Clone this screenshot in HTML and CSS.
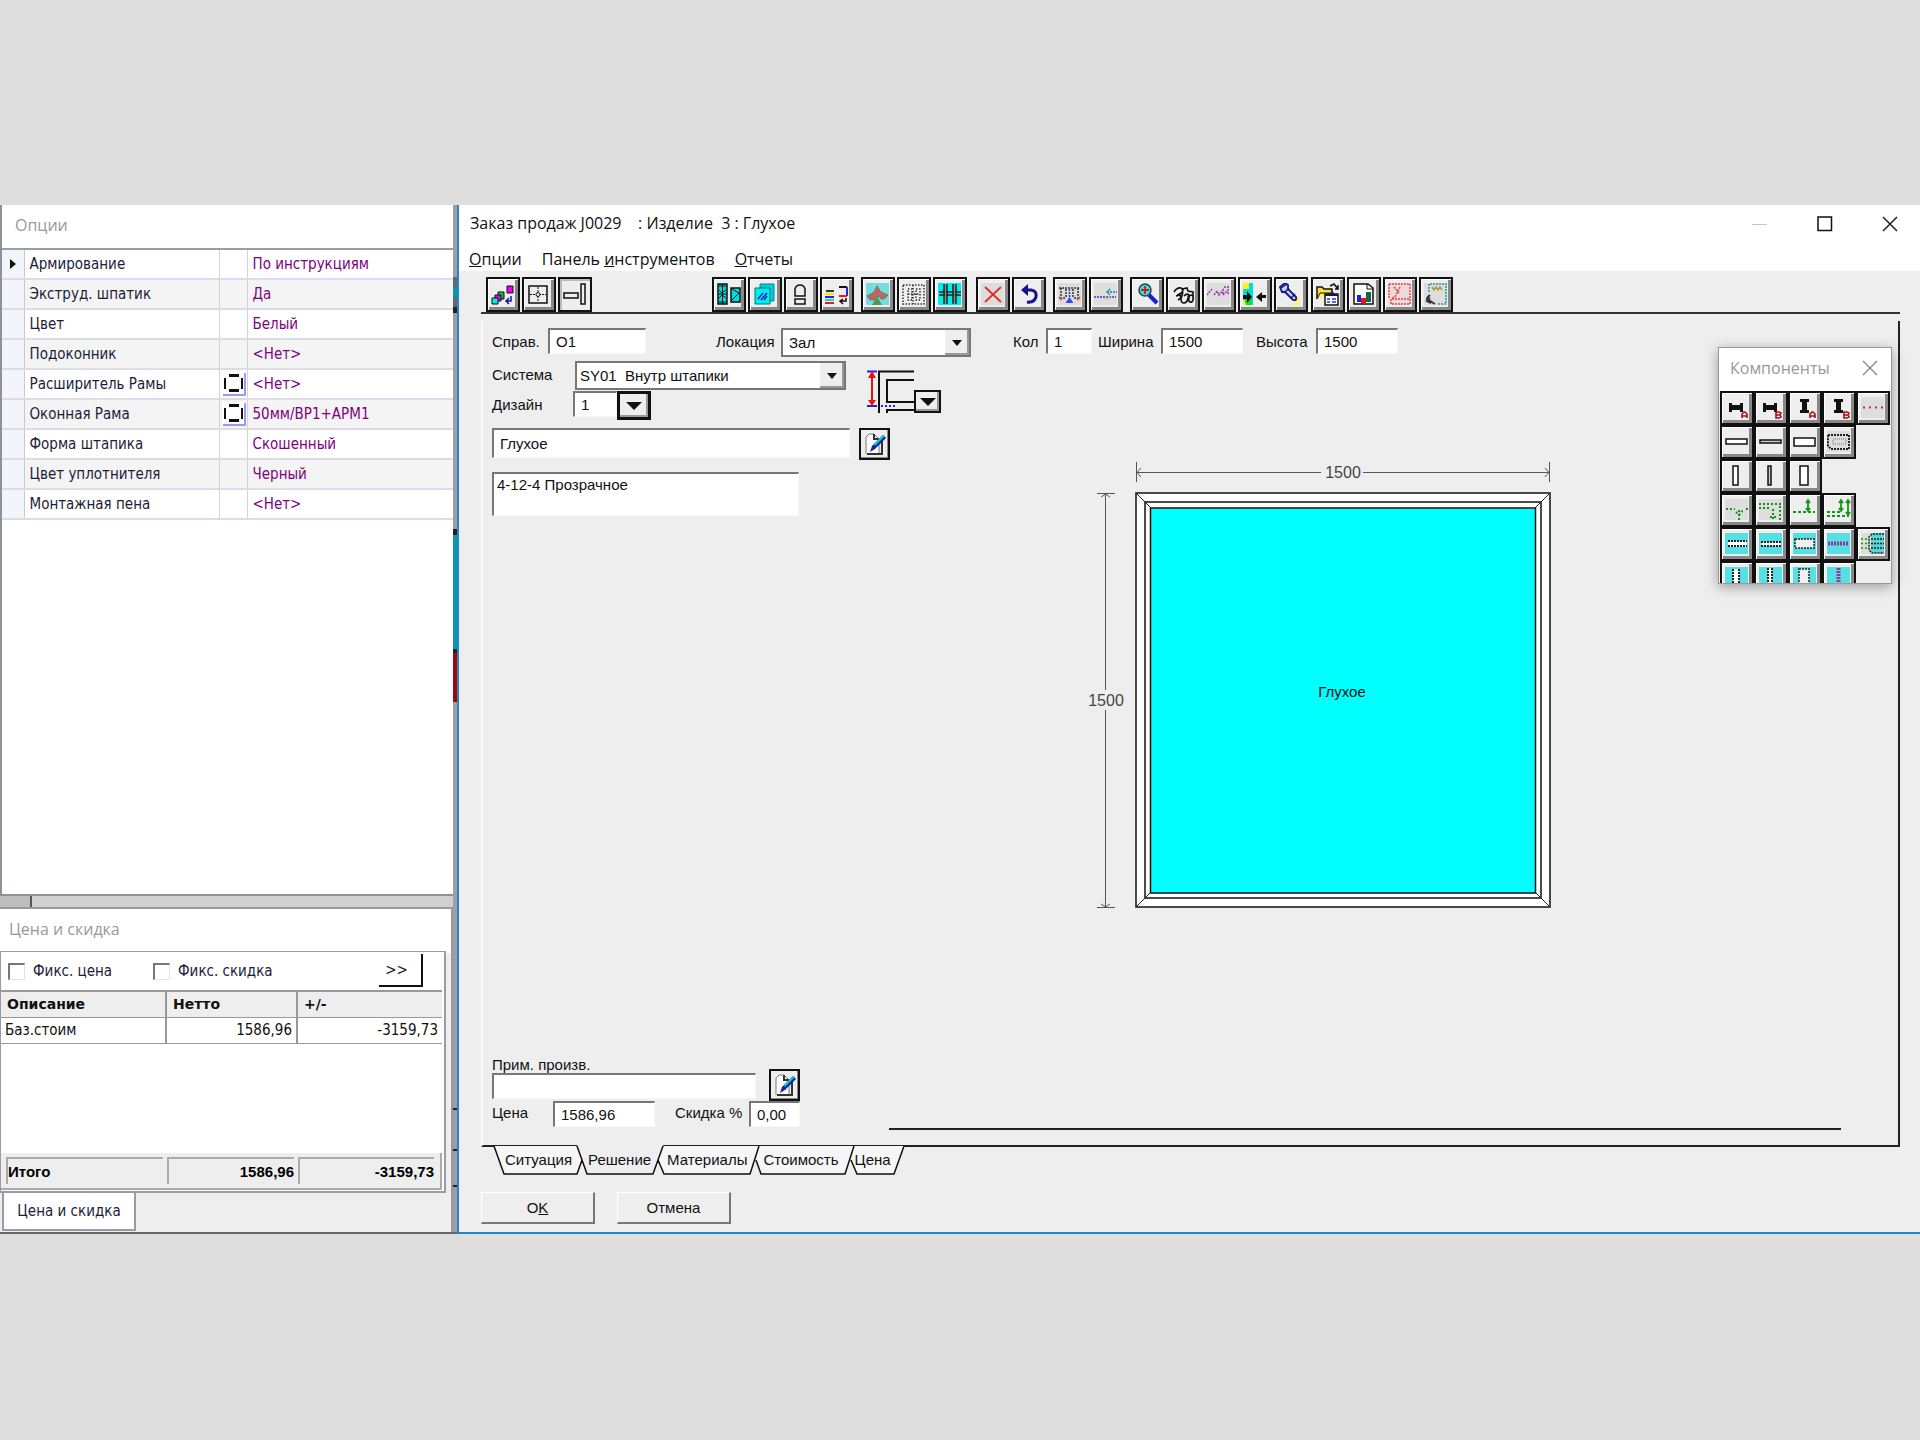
FILE: index.html
```html
<!DOCTYPE html>
<html lang="ru">
<head>
<meta charset="utf-8">
<title>Заказ продаж J0029</title>
<link rel="stylesheet" href="styles.css">
</head>
<body>
<main class="app">
  <aside class="side">
    <section class="options">
      <h2 class="panel-title">Опции</h2>
      <table class="option-grid">
        <tbody>
          <tr><td class="mark"><svg width="6" height="12" viewBox="0 0 6 12"><path d="M0 1l6 5-6 5z" fill="#111"/></svg></td><th scope="row">Армирование</th><td class="glyph"></td><td class="value">По инструкциям</td></tr>
          <tr><td class="mark"></td><th scope="row">Экструд. шпатик</th><td class="glyph"></td><td class="value">Да</td></tr>
          <tr><td class="mark"></td><th scope="row">Цвет</th><td class="glyph"></td><td class="value">Белый</td></tr>
          <tr><td class="mark"></td><th scope="row">Подоконник</th><td class="glyph"></td><td class="value">&lt;Нет&gt;</td></tr>
          <tr><td class="mark"></td><th scope="row">Расширитель Рамы</th><td class="glyph"><svg width="24" height="24" viewBox="0 0 24 24"><path d="M0 0h24v24H0z" fill="#fff"/><path d="M23 1v22H1" fill="none" stroke="#9a9af0" stroke-width="2"/><path d="M7 3.500h10M7 18.500h10" stroke="#111" stroke-width="3"/><path d="M3 6v11M20 6v11" stroke="#111" stroke-width="2"/></svg></td><td class="value">&lt;Нет&gt;</td></tr>
          <tr><td class="mark"></td><th scope="row">Оконная Рама</th><td class="glyph"><svg width="24" height="24" viewBox="0 0 24 24"><path d="M0 0h24v24H0z" fill="#fff"/><path d="M23 1v22H1" fill="none" stroke="#9a9af0" stroke-width="2"/><path d="M7 3.500h10M7 18.500h10" stroke="#111" stroke-width="3"/><path d="M3 6v11M20 6v11" stroke="#111" stroke-width="2"/></svg></td><td class="value">50мм/ВР1+АРМ1</td></tr>
          <tr><td class="mark"></td><th scope="row">Форма штапика</th><td class="glyph"></td><td class="value">Скошенный</td></tr>
          <tr><td class="mark"></td><th scope="row">Цвет уплотнителя</th><td class="glyph"></td><td class="value">Черный</td></tr>
          <tr><td class="mark"></td><th scope="row">Монтажная пена</th><td class="glyph"></td><td class="value">&lt;Нет&gt;</td></tr>
        </tbody>
      </table>
    </section>
    <div class="side-gap"></div>
    <section class="price">
      <h2 class="panel-title price-title">Цена и скидка</h2>
      <div class="price-body">
        <div class="fix-row">
          <label class="check"><input type="checkbox">Фикс. цена</label>
          <label class="check second"><input type="checkbox">Фикс. скидка</label>
          <button class="more" type="button">&gt;&gt;</button>
        </div>
        <table class="price-grid">
          <colgroup><col class="c1"><col class="c2"><col></colgroup>
          <thead><tr><th>Описание</th><th>Нетто</th><th>+/-</th></tr></thead>
          <tbody><tr><td>Баз.стоим</td><td class="num">1586,96</td><td class="num">-3159,73</td></tr></tbody>
        </table>
        <div class="totals"><span>Итого</span><span class="num">1586,96</span><span class="num">-3159,73</span></div>
      </div>
      <div class="price-tabs"><button type="button">Цена и скидка</button></div>
    </section>
    <svg class="strip" width="4" height="1029" viewBox="0 0 4 1029"><path d="M0 0h4v1029H0z" fill="#a09ea0"/><path d="M0 72h4v36H0z" fill="#666"/><path d="M0 82h4v10H0z" fill="#079aa8"/><path d="M0 102h4v6H0zM0 324h4v6H0zM0 444h4v4H0z" fill="#222"/><path d="M0 330h4v114H0z" fill="#079aa8"/><path d="M0 448h4v49H0z" fill="#a80606"/><path d="M0 903h4v2H0zM0 944h4v2H0zM0 980h4v2H0z" fill="#222"/></svg>
  </aside>

  <section class="window">
    <header class="titlebar">
      <h1>Заказ продаж J0029 &nbsp;&nbsp; : Изделие&nbsp; 3 : Глухое</h1>
      <div class="controls">
        <button type="button" aria-label="Свернуть"><svg width="16" height="16" viewBox="0 0 16 16"><path d="M0 8.500h15" stroke="#c4c4c4"/></svg></button>
        <button type="button" aria-label="Развернуть"><svg width="16" height="16" viewBox="0 0 16 16"><path d="M1 1h13.500v13.500H1z" fill="none" stroke="#111" stroke-width="1.500"/></svg></button>
        <button type="button" aria-label="Закрыть"><svg width="16" height="16" viewBox="0 0 16 16"><path d="M1 1l14 14M15 1L1 15" stroke="#222" stroke-width="1.500"/></svg></button>
      </div>
    </header>
    <nav class="menu">
      <a href="#options"><u>О</u>пции</a>
      <a href="#tools">Панель <u>и</u>нструментов</a>
      <a href="#reports"><u>О</u>тчеты</a>
    </nav>

    <div class="toolbar">
      <div class="tools first">
        <button class="tool" type="button" aria-label="Структура"><svg viewBox="0 0 24 24"><g stroke="#111"><path d="M7 9h6v7H7z" fill="#0c3"/><path d="M4 12h6v6H4z" fill="#e0e"/><path d="M1 15h6v6H1z" fill="#0ee"/><path d="M16 3h6v7h-6z" fill="#e0e"/></g><path d="M20 13v5h-5m3-3l-3 3 3 3" fill="none" stroke="#11a" stroke-width="1.500"/></svg></button>
        <button class="tool" type="button" aria-label="Рама"><svg viewBox="0 0 24 24"><path d="M2 3h18v17H2z" fill="none" stroke="#111" stroke-width="1.500"/><path d="M11 4v15M3 11.500h16" stroke="#111" stroke-dasharray="2 1"/><circle cx="11" cy="11.500" r="2" fill="#f0f0f0" stroke="#111"/></svg></button>
        <button class="tool pressed" type="button" aria-label="Импост"><svg viewBox="0 0 24 24"><path d="M1 10h14v5H1zM18 1h4v20h-4z" fill="#eee" stroke="#111" stroke-width="1.500"/></svg></button>
      </div>
      <div class="tools">
        <button class="tool" type="button" aria-label="Створки"><svg viewBox="0 0 24 24"><path d="M1 1h9v20H1zM14 5h9v14h-9z" fill="#0dd" stroke="#111" stroke-width="1.500"/><path d="M5.500 1v20M1 11h9M2 7l3 3 4-3M2 15l3-3 4 3M2 3h7M2 19h7" fill="none" stroke="#111"/><path d="M15 6l7 4-7 7" fill="none" stroke="#111"/></svg></button>
        <button class="tool" type="button" aria-label="Стекло"><svg viewBox="0 0 24 24"><path d="M7 1h14v17H7z" fill="#0cd" stroke="#088"/><path d="M2 5h15v16H2z" fill="#0ee" stroke="#077"/><path d="M5 16l5-6M8 17l6-7M11 17l3-4" stroke="#12c" stroke-width="1.500"/></svg></button>
        <button class="tool" type="button" aria-label="Форма"><svg viewBox="0 0 24 24"><path d="M6 13V6q1-4 5-4t5 4v7zM6 16h10v5H6z" fill="#eee" stroke="#111" stroke-width="1.500"/></svg></button>
        <button class="tool" type="button" aria-label="Цвет"><svg viewBox="0 0 24 24"><g stroke-width="2"><path d="M1 8h8" stroke="#333"/><path d="M0 11h9" stroke="#fd0"/><path d="M0 14h9" stroke="#22f"/><path d="M0 17h9" stroke="#0dd"/><path d="M0 20h9" stroke="#f11"/><path d="M14 4h8" stroke="#111"/><path d="M22 4v9" stroke="#22f"/><path d="M14 13h8" stroke="#f11"/></g><path d="M21 15v3h-5m2-2l-3 2 3 3" fill="none" stroke="#111" stroke-width="1.500"/></svg></button>
      </div>
      <div class="tools gap-s">
        <button class="tool" type="button" aria-label="Вид"><svg viewBox="0 0 24 24"><path d="M0 0h23v22H0z" fill="#73dcdc"/><path d="M11 3l4 6 7 3-4 4h-3l-3-3-4 4H4l-3-4 7-4z" fill="#b86a60" stroke="#744" stroke-dasharray="1 1"/><path d="M11 13l5 9H6z" fill="#4a9a55"/></svg></button>
        <button class="tool" type="button" aria-label="Сетка"><svg viewBox="0 0 24 24"><path d="M1 2h21v19H1zM6 6h4v11H6zM14 6h4v11h-4zM11 2v19M6 11h12" fill="none" stroke="#333" stroke-width="1.500" stroke-dasharray="1.500 1.500"/></svg></button>
        <button class="tool" type="button" aria-label="Раскладка"><svg viewBox="0 0 24 24"><path d="M0 0h23v22H0z" fill="#0ee"/><path d="M6 1v20M9 1v20M15 1v20M18 1v20M1 9h22M1 12h22" stroke="#222" stroke-width="1.500"/><path d="M7.500 2v18M16.500 2v18" stroke="#a77"/></svg></button>
      </div>
      <div class="tools gap-m">
        <button class="tool" type="button" aria-label="Удалить"><svg viewBox="0 0 24 24"><path d="M0 0h23v22H0z" fill="#dcdcdc"/><path d="M4 4l16 15M20 4L4 19" stroke="#e02a2a" stroke-width="1.800"/></svg></button>
        <button class="tool" type="button" aria-label="Отменить"><svg viewBox="0 0 24 24"><path d="M8 7h6q6 1 5 7-2 6-9 5" fill="none" stroke="#13138a" stroke-width="3"/><path d="M11 1v12L4 7z" fill="#13138a"/></svg></button>
      </div>
      <div class="tools gap-s">
        <button class="tool" type="button" aria-label="Размеры"><svg viewBox="0 0 24 24"><path d="M0 0h23v22H0z" fill="#ddd"/><path d="M1 5h21M3 5v10h5M20 5v10h-5M8 6v9M15 6v9" fill="none" stroke="#333" stroke-width="1.500" stroke-dasharray="2 1"/><path d="M11.500 6v9" stroke="#33d" stroke-width="1.500" stroke-dasharray="2 1"/><path d="M11.500 14l4 6h-8z" fill="#44e"/><path d="M1 14l3 3M22 14l-3 3" stroke="#c55" stroke-width="2"/></svg></button>
        <button class="tool" type="button" aria-label="Уровень"><svg viewBox="0 0 24 24"><path d="M0 0h23v22H0z" fill="#ddd"/><path d="M0 14h22" stroke="#33e" stroke-width="1.500" stroke-dasharray="2 1"/><path d="M13 9h10M16 6l-3 3 3 3" fill="none" stroke="#188" stroke-width="1.500" stroke-dasharray="2 1"/><path d="M10 15l3 2 3-4" fill="none" stroke="#cc3"/></svg></button>
      </div>
      <div class="tools gap-s">
        <button class="tool" type="button" aria-label="Масштаб"><svg viewBox="0 0 24 24"><path d="M14 12l8 8" stroke="#12d" stroke-width="4"/><circle cx="10" cy="7" r="6" fill="#3de" stroke="#244" stroke-width="1.500"/><path d="M10 3v8M6 7h8" stroke="#e11" stroke-width="1.800"/></svg></button>
        <button class="tool" type="button" aria-label="Поиск"><svg viewBox="0 0 24 24"><path d="M3 9q3-5 7-4l2 2q-1 4-6 5M5 13l4-1 1 3-3 2M11 6l5-1 1 3 5 1v8M12 9l-2 7q0 4 3 4t4-5l1-4M13 13q3-3 5-1M18 18q-1-5 2-6 3 0 2 5-1 3-3 2z" fill="none" stroke="#111" stroke-width="1.600"/></svg></button>
        <button class="tool" type="button" aria-label="Кривые"><svg viewBox="0 0 24 24"><path d="M0 0h23v22H0z" fill="#ddd"/><path d="M0 12l5-6M7 12l3-4 2 4 4-5v5l5-5v5M17 4h5" fill="none" stroke="#93a" stroke-width="1.500" stroke-dasharray="2 1"/></svg></button>
        <button class="tool" type="button" aria-label="Обмен"><svg viewBox="0 0 24 24"><path d="M0 0h10v22H0z" fill="#0dd"/><path d="M0 0h6v6H0zM0 17h5v5H0z" fill="#fe2"/><path d="M1 16h8v6H3z" fill="#1d4"/><path d="M0 12h4V8l5 6-5 6v-4H0zM23 12h-4V9l-6 5 6 5v-4h4z" fill="#111"/></svg></button>
        <button class="tool" type="button" aria-label="Подсветка"><svg viewBox="0 0 24 24"><path d="M21 10v12H11l6-5z" fill="#fff08a"/><path d="M1 4l5-4 3 2v4l8 8q1 4-3 3L6 9H3z" fill="#c9d6ea" stroke="#13138a" stroke-width="1.800"/><path d="M2 5l6-4M6 9l4-4M12 15l4-4" stroke="#13138a" stroke-width="1.500"/></svg></button>
      </div>
      <div class="tools gap-xs">
        <button class="tool" type="button" aria-label="Открыть"><svg viewBox="0 0 24 24"><path d="M1 16V4h5l2 2h8v5" fill="#fd4" stroke="#111" stroke-width="1.500"/><path d="M1 16l3-6h14" fill="#fe6" stroke="#111"/><path d="M14 3l4-2 4 5m-3 0h3V2" fill="none" stroke="#111" stroke-width="1.500"/><path d="M9 11h13v11H9z" fill="#fff" stroke="#111" stroke-width="1.500"/><path d="M9 12h13" stroke="#117" stroke-width="2"/><path d="M11 16h3M16 16h4M11 19h3M16 19h4" stroke="#33c" stroke-width="1.500"/></svg></button>
        <button class="tool" type="button" aria-label="Отчет"><svg viewBox="0 0 24 24"><path d="M2 1h14l5 4v16H2z" fill="#fff" stroke="#111" stroke-width="1.500"/><path d="M15 1v5h6" fill="none" stroke="#111"/><path d="M5 12h4v7H5z" fill="#12d"/><path d="M9 15h5v5H9z" fill="#e11"/><path d="M14 9h5v10h-5z" fill="#164"/></svg></button>
        <button class="tool" type="button" aria-label="Чертеж"><svg viewBox="0 0 24 24"><path d="M0 0h23v22H0z" fill="#eadada"/><path d="M1 1h21v20H3v-5h18M1 1v14M6 4l5 6M12 4L7 14l-3 1" fill="none" stroke="#e44" stroke-width="1.500" stroke-dasharray="2 1"/></svg></button>
        <button class="tool" type="button" aria-label="Область"><svg viewBox="0 0 24 24"><path d="M0 0h23v22H0z" fill="#ddd"/><path d="M5 9V1h17v20h-9" fill="none" stroke="#299" stroke-width="1.500" stroke-dasharray="2 1"/><path d="M8 4l2 3 2-3 2 3 2-3 2 3" fill="none" stroke="#a93" stroke-width="1.500"/><path d="M6 12q-6 5 0 6l5 3M6 15l-3 3 4 2" fill="none" stroke="#333" stroke-width="2"/></svg></button>
      </div>
    </div>

    <div class="pane">
      <div class="row head">
        <label class="w56" for="ref">Справ.</label><input class="in98" id="ref" value="O1">
        <label class="w65 ml70" for="loc">Локация</label>
        <span class="combo c190"><select id="loc"><option>Зал</option></select><svg viewBox="0 0 24 25"><path d="M7 10h10l-5 6z" fill="#111"/></svg></span>
        <label class="w33 ml42" for="qty">Кол</label><input class="in46" id="qty" value="1">
        <label class="w63 ml6" for="wid">Ширина</label><input class="in82" id="wid" value="1500">
        <label class="w60 ml13" for="hei">Высота</label><input class="in82" id="hei" value="1500">
      </div>
      <div class="middle">
        <div class="fields">
          <div class="system">
            <div class="system-rows">
              <div class="row">
                <label class="w83" for="sys">Система</label>
                <span class="combo c271"><select id="sys"><option>SY01&nbsp; Внутр штапики</option></select><svg viewBox="0 0 24 25"><path d="M7 10h10l-5 6z" fill="#111"/></svg></span>
              </div>
              <div class="row">
                <label class="w81" for="des">Дизайн</label><input class="in44" id="des" value="1">
                <button class="drop" type="button" aria-label="Выбрать дизайн"><svg width="16" height="10" viewBox="0 0 16 10"><path d="M0 1h16L8 9z" fill="#111"/></svg></button>
              </div>
            </div>
            <svg class="profile" width="48" height="44" viewBox="0 0 48 44"><path d="M1 2.500h10M1 37h10" stroke="#22e" stroke-width="2"/><path d="M15 37h15" stroke="#22e" stroke-width="2" stroke-dasharray="2 2"/><path d="M6 4v31" stroke="#e11" stroke-width="2"/><path d="M6 2l4 7H2zM6 37l4-6H2z" fill="#e11"/><path d="M13 44V2.500h35M48 11H21v22h27M21 44v-3h27" fill="none" stroke="#111" stroke-width="2"/></svg>
            <button class="drop small" type="button" aria-label="Выбрать профиль"><svg width="16" height="10" viewBox="0 0 16 10"><path d="M0 1h16L8 9z" fill="#111"/></svg></button>
          </div>
          <div class="row name-row">
            <input class="in358" aria-label="Название" value="Глухое">
            <button class="edit" type="button" aria-label="Изменить название"><svg width="24" height="24" viewBox="0 0 24 24"><path d="M3 22V5l3-3h5l5 5v15" fill="#fff" stroke="#777"/><path d="M11 2v5h5M19 8v14H4" fill="none" stroke="#333" stroke-width="2"/><path d="M7 20l2-6L20 3l3 3-11 11z" fill="#12a"/><path d="M11 12l9-9 2 1-10 10z" fill="#1cc"/></svg></button>
          </div>
          <textarea class="note" aria-label="Заполнение">4-12-4 Прозрачное</textarea>
        </div>
        <div class="canvas">
          <svg width="466" height="450" viewBox="0 0 466 450" role="img" aria-label="Глухое 1500 на 1500">
            <g fill="none" stroke="#555" stroke-width="1"><path d="M48.500 2v20M461.500 2v20M49 12.500h184M275 12.500h186M53 8l-4 4.500 4 4.500M457 8l4 4.500-4 4.500"/><path d="M9 33.500h18M9 447.500h18M17.500 34v196M17.500 250v197M13 37l4.500-3 4.500 3M13 444l4.500 3 4.500-3"/></g>
            <path d="M48 33h414v414H48z" fill="#fff" stroke="#111" stroke-width="1.500"/>
            <path d="M57 42h396v396H57z" fill="#fff" stroke="#111" stroke-width="1.500"/>
            <path d="M48 33l15 15M462 33l-15 15M48 447l15-15M462 447l-15-15" stroke="#222"/>
            <path d="M62.500 48h385v385h-385z" fill="#0ff" stroke="#111" stroke-width="1.500"/>
            <text class="dim" x="255" y="18">1500</text>
            <text class="dim" x="18" y="246">1500</text>
            <text class="dim glass" x="254" y="237">Глухое</text>
          </svg>
        </div>
      </div>
      <div class="foot">
        <div class="foot-fields">
          <div class="row">
            <div class="remark"><label for="rem">Прим. произв.</label><input class="in264" id="rem"></div>
            <button class="edit" type="button" aria-label="Изменить примечание"><svg width="24" height="24" viewBox="0 0 24 24"><path d="M3 22V5l3-3h5l5 5v15" fill="#fff" stroke="#777"/><path d="M11 2v5h5M19 8v14H4" fill="none" stroke="#333" stroke-width="2"/><path d="M7 20l2-6L20 3l3 3-11 11z" fill="#12a"/><path d="M11 12l9-9 2 1-10 10z" fill="#1cc"/></svg></button>
          </div>
          <div class="row cost-row">
            <label class="w61" for="cost">Цена</label><input class="in102" id="cost" value="1586,96">
            <label class="w74 ml20" for="disc">Скидка %</label><input class="in51" id="disc" value="0,00">
          </div>
        </div>
        <div class="rule"></div>
      </div>
    </div>
    <div class="tabs" role="tablist">
      <svg class="tab-shapes" width="430" height="32" viewBox="0 0 430 32"><path d="M13 1l10 28h73l5-14-5-14zM177 15l6 14h86l9-28H182zM275 15l5 14h84l9-28h-95zM370 15l6 14h37l10-28h-50z" fill="#f6f6f6"/><path d="M96 0h86v3l-10 26h-66z" fill="#eee"/><path d="M13 1l10 28h73l5-14M96 1l10 28h66l10-28M177 15l6 14h86l9-28M275 15l5 14h84l9-28M370 15l6 14h37l10-28" fill="none" stroke="#111" stroke-width="1.500"/></svg>
      <button type="button" role="tab">Ситуация</button>
      <button type="button" role="tab" aria-selected="true">Решение</button>
      <button type="button" role="tab">Материалы</button>
      <button type="button" role="tab">Стоимость</button>
      <button type="button" role="tab">Цена</button>
    </div>
    <div class="actions">
      <button type="button">O<u>K</u></button>
      <button type="button">Отмена</button>
    </div>

    <section class="palette">
      <header><h2>Компоненты</h2><button type="button" aria-label="Закрыть компоненты"><svg width="16" height="16" viewBox="0 0 16 16"><path d="M1 1l14 14M15 1L1 15" stroke="#888" stroke-width="1.300"/></svg></button></header>
      <div class="palette-grid">
        <button class="tool" type="button" aria-label="Импост A"><svg viewBox="0 0 24 24"><path d="M4 7h3v2h8V7h3v9h-3v-2H7v2H4z" fill="#111"/><path d="M17 22v-4l2-2h1l2 2v4m-5-2h5" fill="none" stroke="#a11" stroke-width="1.600"/></svg></button>
        <button class="tool" type="button" aria-label="Импост B"><svg viewBox="0 0 24 24"><path d="M4 7h3v2h8V7h3v9h-3v-2H7v2H4z" fill="#111"/><path d="M17 16h3l2 1-1 2 1 2-2 1h-3zm0 3h4" fill="none" stroke="#a11" stroke-width="1.600"/></svg></button>
        <button class="tool" type="button" aria-label="Стойка A"><svg viewBox="0 0 24 24"><path d="M7 3h9v3h-2v8h2v3H7v-3h2V6H7z" fill="#111"/><path d="M17 22v-4l2-2h1l2 2v4m-5-2h5" fill="none" stroke="#a11" stroke-width="1.600"/></svg></button>
        <button class="tool" type="button" aria-label="Стойка B"><svg viewBox="0 0 24 24"><path d="M7 3h9v3h-2v8h2v3H7v-3h2V6H7z" fill="#111"/><path d="M17 16h3l2 1-1 2 1 2-2 1h-3zm0 3h4" fill="none" stroke="#a11" stroke-width="1.600"/></svg></button>
        <button class="tool" type="button" aria-label="Линия"><svg viewBox="0 0 24 24"><path d="M0 1h23v21H0z" fill="#ddd"/><path d="M2 11.500h21" stroke="#d22" stroke-width="2" stroke-dasharray="2 4"/></svg></button>

        <button class="tool start" type="button" aria-label="Горизонталь средняя"><svg viewBox="0 0 24 24"><path d="M1 9h21v5H1z" fill="#fff" stroke="#111" stroke-width="1.500"/></svg></button>
        <button class="tool" type="button" aria-label="Горизонталь узкая"><svg viewBox="0 0 24 24"><path d="M1 10h21v3H1z" fill="#ccc" stroke="#111" stroke-width="1.500"/></svg></button>
        <button class="tool" type="button" aria-label="Горизонталь широкая"><svg viewBox="0 0 24 24"><path d="M1 8h21v8H1z" fill="#fff" stroke="#111" stroke-width="1.500"/></svg></button>
        <button class="tool" type="button" aria-label="Контур"><svg viewBox="0 0 24 24"><path d="M0 1h23v21H0z" fill="#ddd"/><path d="M1 5h21v14H4l-3-3z" fill="none" stroke="#222" stroke-width="2" stroke-dasharray="2 1"/><path d="M6 9h13v5H6z" fill="none" stroke="#777" stroke-dasharray="1 1"/></svg></button>

        <button class="tool start" type="button" aria-label="Вертикаль средняя"><svg viewBox="0 0 24 24"><path d="M8 2h5v19H8z" fill="#fff" stroke="#111" stroke-width="1.500"/></svg></button>
        <button class="tool" type="button" aria-label="Вертикаль узкая"><svg viewBox="0 0 24 24"><path d="M9 2h3v19H9z" fill="#ccc" stroke="#111" stroke-width="1.500"/></svg></button>
        <button class="tool" type="button" aria-label="Вертикаль широкая"><svg viewBox="0 0 24 24"><path d="M7 2h8v19H7z" fill="#fff" stroke="#111" stroke-width="1.500"/></svg></button>

        <button class="tool start" type="button" aria-label="Точка"><svg viewBox="0 0 24 24"><path d="M0 1h23v21H0z" fill="#ddd"/><path d="M1 11h9M14 12v10M11 14l3 3 4-5M21 11h2" fill="none" stroke="#191" stroke-width="2" stroke-dasharray="2 2"/></svg></button>
        <button class="tool" type="button" aria-label="Точки"><svg viewBox="0 0 24 24"><path d="M0 1h23v21H0z" fill="#ddd"/><path d="M0 6h22M0 10h10M14 11v11M21 8v14M11 19h8" fill="none" stroke="#191" stroke-width="2" stroke-dasharray="2 2"/></svg></button>
        <button class="tool" type="button" aria-label="Привязка"><svg viewBox="0 0 24 24"><path d="M0 14h22" stroke="#191" stroke-width="2" stroke-dasharray="3 2"/><path d="M15 4v9M13 5l2-3 2 3M13 10l2 3 2-3" fill="none" stroke="#191" stroke-width="1.800"/></svg></button>
        <button class="tool" type="button" aria-label="Двойная привязка"><svg viewBox="0 0 24 24"><path d="M0 14h13M0 18h22" stroke="#191" stroke-width="2" stroke-dasharray="3 2"/><path d="M14 3v10M21 3v14M12 5l2-3 2 3M12 10l2 3 2-3M19 5l2-3 2 3M19 14l2 3 2-3" fill="none" stroke="#191" stroke-width="1.800"/></svg></button>

        <button class="tool start" type="button" aria-label="Стык средний"><svg viewBox="0 0 24 24"><path d="M0 1h23v21H0z" fill="#56e0e3"/><path d="M3 9h19v6H3z" fill="#fff"/><path d="M3 9h19M3 14h19" stroke="#222" stroke-width="2" stroke-dasharray="2 1"/></svg></button>
        <button class="tool" type="button" aria-label="Стык узкий"><svg viewBox="0 0 24 24"><path d="M0 1h23v21H0z" fill="#56e0e3"/><path d="M2 10h20v4H2z" fill="#fff"/><path d="M2 10h20M2 14h20" stroke="#222" stroke-width="2" stroke-dasharray="2 1"/></svg></button>
        <button class="tool" type="button" aria-label="Стык широкий"><svg viewBox="0 0 24 24"><path d="M0 1h23v21H0z" fill="#56e0e3"/><path d="M2 7h19v9H2z" fill="#f0f0f0"/><path d="M2 7h19v9H2z" fill="none" stroke="#222" stroke-width="1.500" stroke-dasharray="2 1"/></svg></button>
        <button class="tool" type="button" aria-label="Соединитель"><svg viewBox="0 0 24 24"><path d="M0 1h23v21H0z" fill="#56e0e3"/><path d="M1 11.500h21" stroke="#939" stroke-width="4" stroke-dasharray="2 1"/></svg></button>
        <button class="tool" type="button" aria-label="Сборка"><svg viewBox="0 0 24 24"><path d="M0 1h23v21H0z" fill="#ddd"/><path d="M10 1h13v20H10z" fill="#56d5da"/><path d="M23 2H11L8 5v13l3 3h12M10 7h13M10 11.500h13M10 16h13" fill="none" stroke="#222" stroke-width="1.500" stroke-dasharray="2 1"/><path d="M0 7h7M0 11.500h7M0 16h7" stroke="#191" stroke-width="1.500" stroke-dasharray="2 2"/></svg></button>

        <button class="tool start" type="button" aria-label="Вертикальный стык средний"><svg viewBox="0 0 24 24"><path d="M0 1h23v21H0z" fill="#56e0e3"/><path d="M8 3h6v19H8z" fill="#fff"/><path d="M8 3v19M14 3v19" stroke="#222" stroke-width="2" stroke-dasharray="2 1"/></svg></button>
        <button class="tool" type="button" aria-label="Вертикальный стык узкий"><svg viewBox="0 0 24 24"><path d="M0 1h23v21H0z" fill="#56e0e3"/><path d="M9 2h4v20H9z" fill="#fff"/><path d="M9 2v20M13 2v20" stroke="#222" stroke-width="2" stroke-dasharray="2 1"/></svg></button>
        <button class="tool" type="button" aria-label="Вертикальный стык широкий"><svg viewBox="0 0 24 24"><path d="M0 1h23v21H0z" fill="#56e0e3"/><path d="M6 3h10v19H6z" fill="#f0f0f0" stroke="#222" stroke-width="1.500" stroke-dasharray="2 1"/></svg></button>
        <button class="tool" type="button" aria-label="Вертикальный соединитель"><svg viewBox="0 0 24 24"><path d="M0 1h23v21H0z" fill="#56e0e3"/><path d="M11.500 2v20" stroke="#939" stroke-width="4" stroke-dasharray="2 1"/></svg></button>
      </div>
    </section>
  </section>
</main>
</body>
</html>
```
FILE: styles.css
```css
* { box-sizing: border-box; }

body {
  margin: 0;
  min-height: 100vh;
  padding: 205px 0 206px;
  display: flex;
  background: #dedede;
  color: #111;
  font: 15px/20px "Liberation Sans", Arial, sans-serif;
}

h1, h2 { margin: 0; font-weight: 400; }
button, input, select, textarea { font: inherit; color: inherit; border-radius: 0; margin: 0; }
button { padding: 0; border: 0; background: none; }
svg { display: block; flex: none; }
table { border-collapse: collapse; table-layout: fixed; width: 100%; }

.app { flex: 1; display: grid; grid-template-columns: 457px minmax(0, 1fr); }

/* left column */
.side {
  position: relative;
  display: flex;
  flex-direction: column;
  background: #d0d0d0;
  border-bottom: 2px solid #666;
  font: 15px/20px "DejaVu Sans Condensed", "DejaVu Sans", Tahoma, sans-serif;
  color: #1c1c38;
  overflow: hidden;
}
.strip { position: absolute; top: 0; right: 0; }
.options {
  flex: 1;
  width: 454px;
  background: #fff;
  border: solid #8e9197;
  border-width: 0 1px 2px 2px;
}
.panel-title {
  height: 43px;
  padding: 0 13px;
  font: 16px/40px "Open Sans", "Segoe UI", sans-serif;
  color: #999;
}
.option-grid { border-top: 2px solid #9a9ca6; }
.option-grid tr { height: 30px; border-bottom: 2px solid #dcdce4; }
.option-grid tr:nth-child(even) { background: #f4f4f4; }
.option-grid td, .option-grid th { padding: 0 0 0 5px; text-align: left; font-weight: 400; height: 30px; }
.option-grid th { width: 195px; border-right: 1px solid #d2d2dc; }
.option-grid .mark { width: 22px; padding-left: 8px; background: #f4f5fa; border-right: 1px solid #c8c8d4; }
.option-grid .glyph { width: 28px; padding-left: 2px; border-right: 1px solid #d2d2dc; }
.option-grid .value { color: #800080; }

.side-gap { height: 11px; width: 32px; border-right: 2px solid #555; background: #bdbdbd; }
.price { width: 453px; border-top: 2px solid #999; border-right: 2px solid #999; background: linear-gradient(#fff 44px, #eee 44px); }
.price-title { height: 42px; padding-left: 9px; }
.price-body { width: 446px; background: #fff; border: solid #9a9aa8; border-width: 1px 2px 2px 1px; height: 242px; display: flex; flex-direction: column; }
.fix-row { display: flex; align-items: flex-start; height: 38px; padding: 2px 0 0 7px; }
.check { display: flex; align-items: center; gap: 8px; height: 34px; width: 145px; }
.check.second { width: 226px; }
.check input {
  appearance: none;
  width: 17px; height: 17px;
  background: #fff;
  border: solid; border-width: 2px 1px 1px 2px;
  border-color: #777 #e2e2e2 #e2e2e2 #777;
}
.more { width: 44px; height: 33px; padding-right: 7px; background: #fff; border: solid #111; border-width: 0 2px 2px 0; }
.price-grid { width: 441px; border-top: 2px solid #999; color: #111; }
.price-grid .c1 { width: 165px; }
.price-grid .c2 { width: 131px; }
.price-grid tr { height: 26px; border-bottom: 1px solid #999; }
.price-grid th { padding: 0 6px; text-align: left; background: #eee; font: bold 14px/20px "DejaVu Sans", sans-serif; }
.price-grid td { padding: 0 4px; }
.price-grid td + td, .price-grid th + th { border-left: 2px solid #999; }
.num { text-align: right; }
.totals {
  margin-top: auto;
  margin-bottom: 1px;
  display: grid;
  grid-template-columns: 157px 127px 136px;
  gap: 4px;
  height: 37px;
  width: 441px;
  padding: 4px 5px;
  background: #eee;
  border: solid #aaa; border-width: 0 2px 2px 0;
  font: bold 15px/25px "Liberation Sans", Arial, sans-serif;
  color: #000;
}
.totals span { border: solid #aaa; border-width: 2px 0 0 2px; }
.price-tabs { height: 39px; padding-left: 2px; }
.price-tabs button { width: 134px; height: 38px; background: #fff; border: solid #9a9aa8; border-width: 0 2px 2px; }

/* main window */
.window {
  position: relative;
  display: flex;
  flex-direction: column;
  border: solid #2486cc; border-width: 0 0 2px 2px;
  background: #eee;
}
.titlebar { display: flex; justify-content: space-between; height: 38px; padding: 0 22px 0 11px; background: #fff; }
.titlebar h1 { font: 16px/37px "Open Sans", "Segoe UI", sans-serif; white-space: pre; }
.controls { display: flex; gap: 49px; align-items: center; }
.menu { display: flex; gap: 20px; height: 28px; padding-left: 10px; background: #fff; font: 16px/33px "Open Sans", "Segoe UI", sans-serif; }
.menu a { color: inherit; text-decoration: none; height: 28px; }

.toolbar { display: flex; margin: 0 20px 0 22px; padding: 6px 0 0 5px; border-bottom: 2px solid #333; }
.tools { display: flex; gap: 2px; }
.tools.first { width: 226px; }
.gap-xs { margin-left: 3px; }
.gap-s { margin-left: 7px; }
.gap-m { margin-left: 9px; }
.tool {
  width: 34px; height: 35px;
  border: 2px solid #111;
  background: #eee;
  box-shadow: inset 1px 1px #fff, inset -3px -3px #888;
}
.tool svg { width: 24px; height: 24px; margin: 0 auto; }
.tool.pressed { box-shadow: inset 2px 2px #bbb; }

.pane {
  flex: 1;
  display: flex;
  flex-direction: column;
  margin: 7px 20px 0 22px;
  padding: 7px 0 15px 9px;
  border: solid; border-width: 0 2px 2px;
  border-color: #222 #222 #222 #fafafa;
}
.row { display: flex; align-items: flex-start; }
.row label { line-height: 27px; }
.head { height: 33px; }
input, textarea, .combo {
  height: 26px;
  background: #fff;
  border: solid; border-width: 2px 1px 1px 2px;
  border-color: #777 #f8f8f8 #f8f8f8 #777;
}
input { padding: 0 0 0 6px; }
.combo { display: flex; height: 29px; border-color: #777; border-width: 2px; }
.combo select { flex: 1; min-width: 0; appearance: none; border: 0; background: none; padding: 0 6px; }
.combo svg { width: 24px; height: 25px; background: #eee; box-shadow: inset -2px -2px #999; }
.w33 { width: 33px; } .w56 { width: 56px; } .w60 { width: 60px; } .w61 { width: 61px; }
.w63 { width: 63px; } .w65 { width: 65px; } .w74 { width: 74px; } .w81 { width: 81px; } .w83 { width: 83px; }
.ml6 { margin-left: 6px; } .ml13 { margin-left: 13px; } .ml20 { margin-left: 20px; }
.ml42 { margin-left: 42px; } .ml70 { margin-left: 70px; }
.in44 { width: 44px; } .in46 { width: 46px; } .in51 { width: 51px; } .in82 { width: 82px; }
.in98 { width: 98px; } .in102 { width: 102px; } .in264 { width: 264px; } .in358 { width: 358px; }
.c190 { width: 190px; } .c271 { width: 271px; }
.c271 select { padding: 0 3px; }

.middle { flex: 1; display: flex; }
.fields { width: 596px; }
.system { display: flex; align-items: flex-start; }
.system-rows { width: 374px; display: grid; gap: 1px; }
.profile { margin-top: 8px; }
.drop { width: 34px; height: 29px; display: grid; place-items: center; border: 3px solid #111; background: #eee; box-shadow: inset -2px -2px #999; }
.drop.small { width: 27px; height: 23px; margin-top: 29px; border-width: 2px; }
.name-row { margin-top: 8px; }
.name-row input { height: 30px; }
.edit { width: 31px; height: 32px; margin-left: 9px; padding: 2px; border: 2px solid #111; background: #eee; box-shadow: inset -1px -1px #888; }
.note { display: block; width: 307px; height: 44px; margin-top: 12px; padding: 1px 3px; resize: none; overflow: hidden; }
.canvas { flex: 1; padding-top: 99px; }
.dim { font-size: 16px; fill: #444; text-anchor: middle; }
.dim.glass { font-size: 15px; fill: #111; }

.foot { display: flex; }
.foot-fields { width: 397px; display: grid; padding-bottom: 3px; }
.remark { display: grid; width: 264px; }
.remark label { line-height: 16px; }
.foot .cost-row label { line-height: 24px; }
.foot .edit { margin: 12px 0 0 13px; }
.rule { flex: 1; margin-right: 57px; border-bottom: 2px solid #222; }

.tabs { position: relative; display: flex; gap: 16px; margin-left: 22px; padding-left: 24px; height: 45px; }
.tab-shapes { position: absolute; left: 0; top: -2px; }
.tabs button { position: relative; height: 26px; }
.actions { display: flex; gap: 22px; padding: 0 0 8px 22px; }
.actions button { width: 114px; height: 32px; background: #eee; border: solid; border-width: 1px 2px 2px 1px; border-color: #fff #777 #777 #fff; }

/* floating palette */
.palette {
  position: absolute;
  right: 28px; top: 142px;
  width: 174px; height: 237px;
  overflow: hidden;
  border: 1px solid #999;
  background: #eee;
  box-shadow: 0 3px 12px rgba(0, 0, 0, .35);
}
.palette header { display: flex; align-items: center; justify-content: space-between; height: 43px; padding: 0 13px 3px 11px; background: #fff; }
.palette h2 { font: 16px/20px "Open Sans", "Segoe UI", sans-serif; color: #999; }
.palette-grid { display: grid; grid-template-columns: repeat(5, 34px); padding-left: 1px; }
.palette .tool { height: 34px; }
.start { grid-column: 1; }
```
